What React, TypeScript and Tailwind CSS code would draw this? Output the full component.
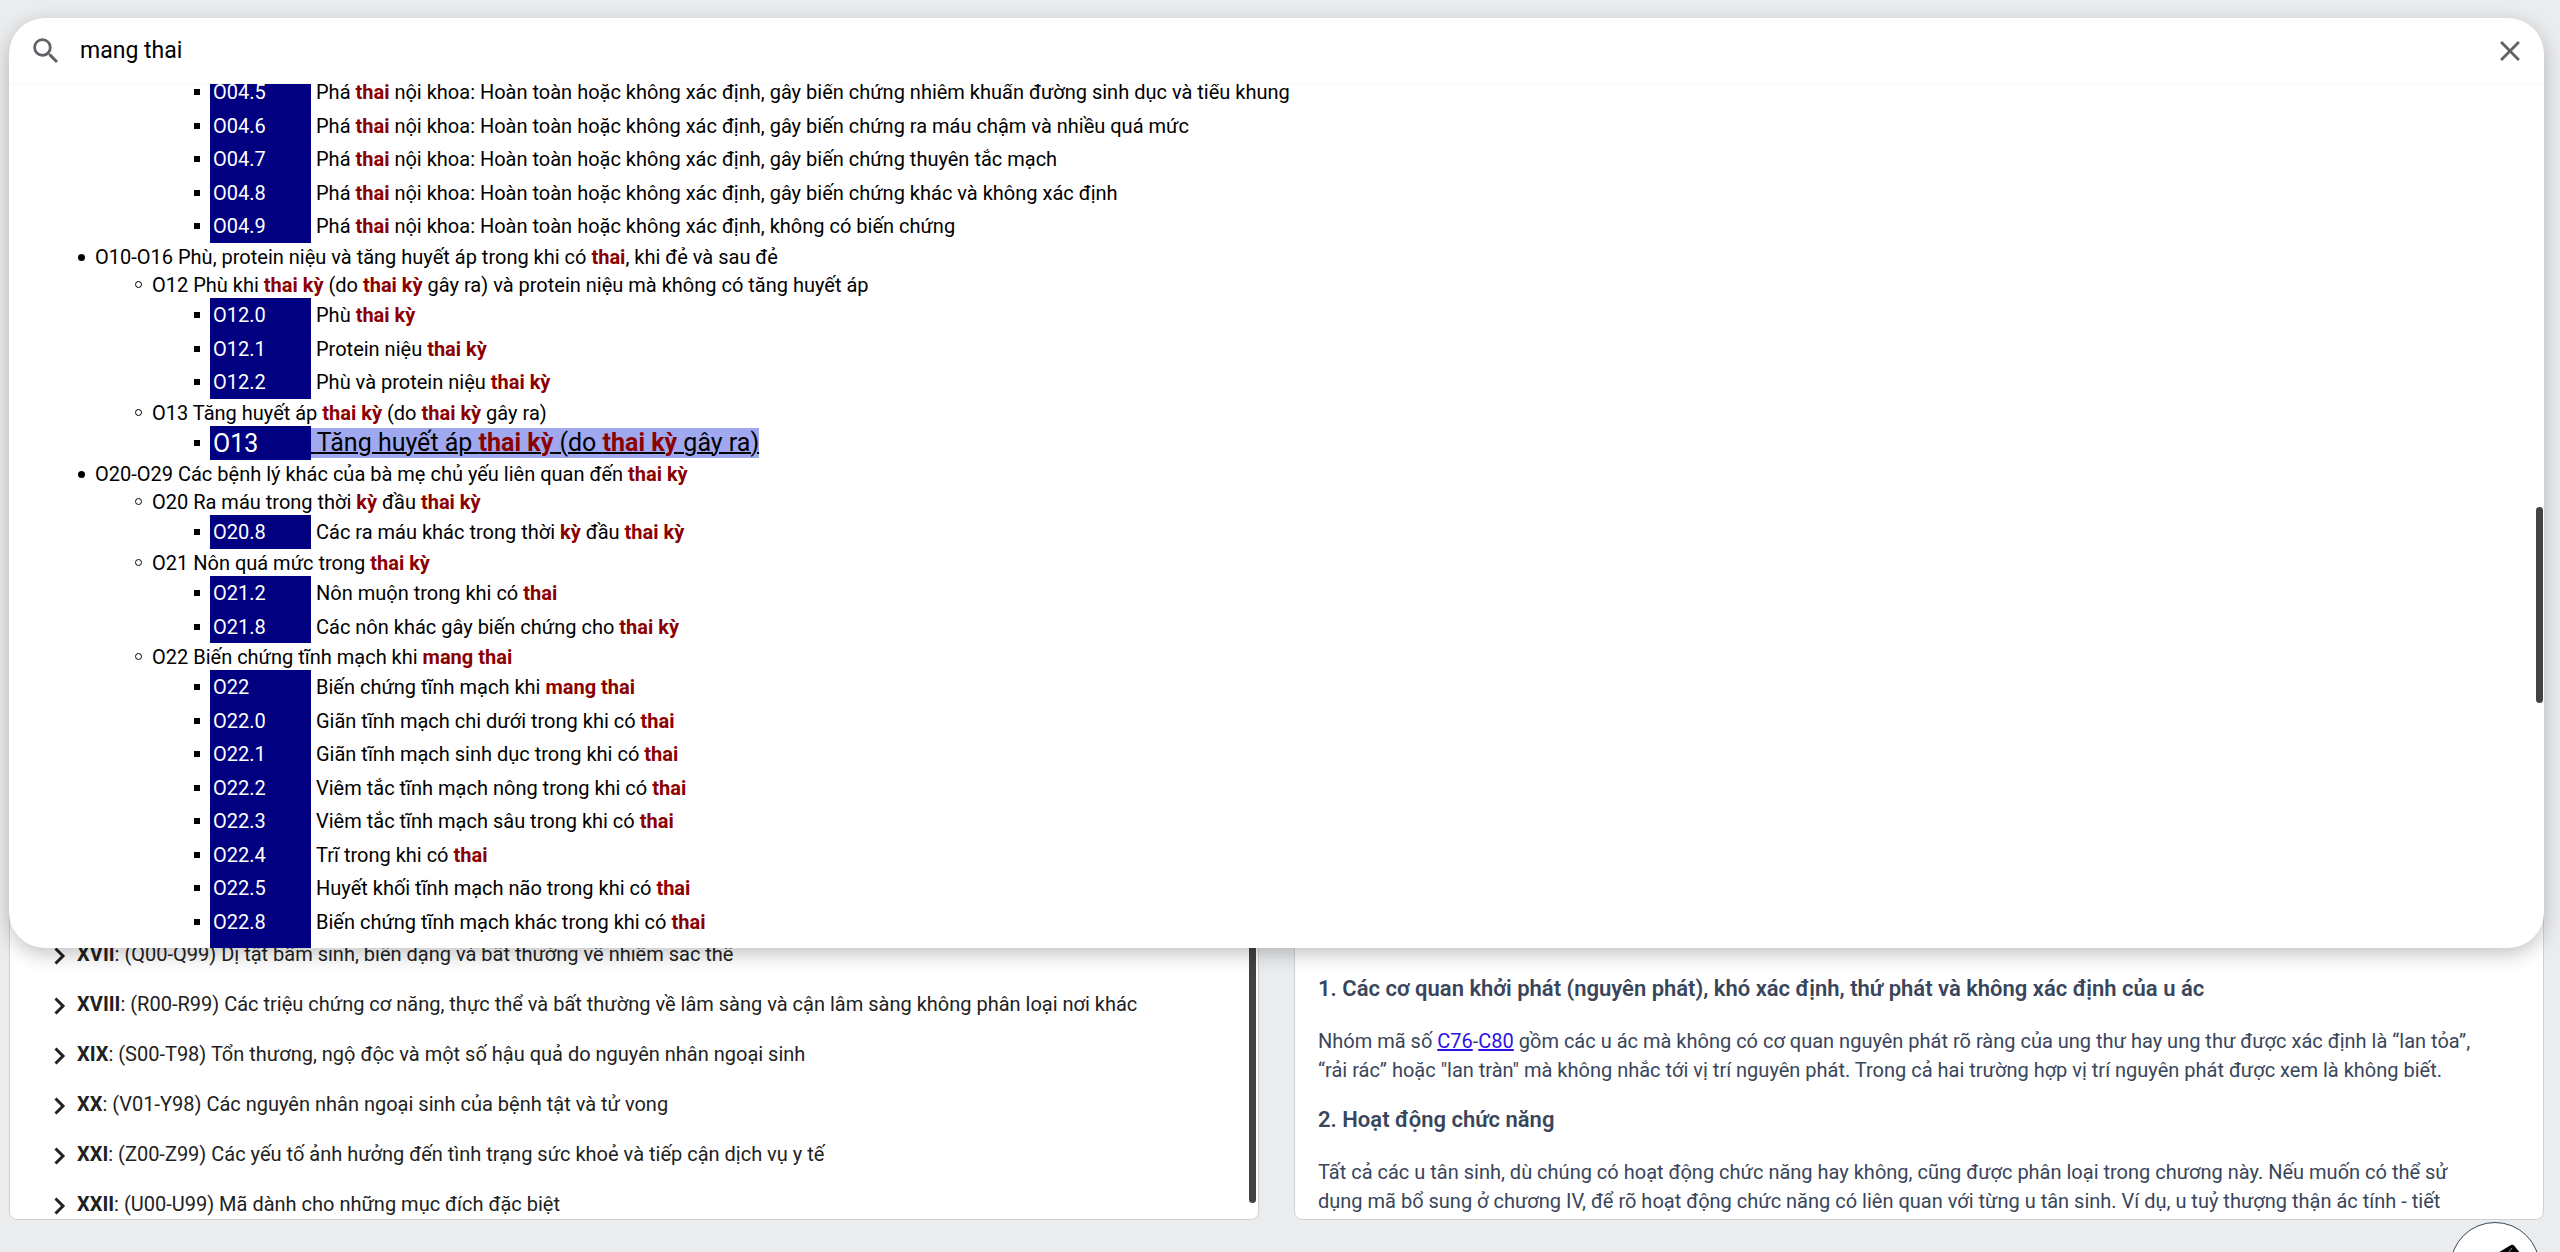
import React, { ReactNode } from "react";

type Item = { code: string; text: string; active?: boolean };
type Block = { title: string; items: Item[] };
type Chapter = { title: string; blocks: Block[] };

const loose: Item[] = [
  { code: "O04.5", text: "Phá *thai* nội khoa: Hoàn toàn hoặc không xác định, gây biến chứng nhiêm khuẩn đường sinh dục và tiểu khung" },
  { code: "O04.6", text: "Phá *thai* nội khoa: Hoàn toàn hoặc không xác định, gây biến chứng ra máu chậm và nhiều quá mức" },
  { code: "O04.7", text: "Phá *thai* nội khoa: Hoàn toàn hoặc không xác định, gây biến chứng thuyên tắc mạch" },
  { code: "O04.8", text: "Phá *thai* nội khoa: Hoàn toàn hoặc không xác định, gây biến chứng khác và không xác định" },
  { code: "O04.9", text: "Phá *thai* nội khoa: Hoàn toàn hoặc không xác định, không có biến chứng" },
];

const chapters: Chapter[] = [
  {
    title: "O10-O16 Phù, protein niệu và tăng huyết áp trong khi có *thai*, khi đẻ và sau đẻ",
    blocks: [
      {
        title: "O12 Phù khi *thai kỳ* (do *thai kỳ* gây ra) và protein niệu mà không có tăng huyết áp",
        items: [
          { code: "O12.0", text: "Phù *thai kỳ*" },
          { code: "O12.1", text: "Protein niệu *thai kỳ*" },
          { code: "O12.2", text: "Phù và protein niệu *thai kỳ*" },
        ],
      },
      {
        title: "O13 Tăng huyết áp *thai kỳ* (do *thai kỳ* gây ra)",
        items: [{ code: "O13", text: "Tăng huyết áp *thai kỳ* (do *thai kỳ* gây ra)", active: true }],
      },
    ],
  },
  {
    title: "O20-O29 Các bệnh lý khác của bà mẹ chủ yếu liên quan đến *thai kỳ*",
    blocks: [
      {
        title: "O20 Ra máu trong thời *kỳ* đầu *thai kỳ*",
        items: [{ code: "O20.8", text: "Các ra máu khác trong thời *kỳ* đầu *thai kỳ*" }],
      },
      {
        title: "O21 Nôn quá mức trong *thai kỳ*",
        items: [
          { code: "O21.2", text: "Nôn muộn trong khi có *thai*" },
          { code: "O21.8", text: "Các nôn khác gây biến chứng cho *thai kỳ*" },
        ],
      },
      {
        title: "O22 Biến chứng tĩnh mạch khi *mang thai*",
        items: [
          { code: "O22", text: "Biến chứng tĩnh mạch khi *mang thai*" },
          { code: "O22.0", text: "Giãn tĩnh mạch chi dưới trong khi có *thai*" },
          { code: "O22.1", text: "Giãn tĩnh mạch sinh dục trong khi có *thai*" },
          { code: "O22.2", text: "Viêm tắc tĩnh mạch nông trong khi có *thai*" },
          { code: "O22.3", text: "Viêm tắc tĩnh mạch sâu trong khi có *thai*" },
          { code: "O22.4", text: "Trĩ trong khi có *thai*" },
          { code: "O22.5", text: "Huyết khối tĩnh mạch não trong khi có *thai*" },
          { code: "O22.8", text: "Biến chứng tĩnh mạch khác trong khi có *thai*" },
        ],
      },
    ],
  },
];

const tree = [
  ["XVII", "(Q00-Q99) Dị tật bẩm sinh, biến dạng và bất thường về nhiễm sắc thể"],
  ["XVIII", "(R00-R99) Các triệu chứng cơ năng, thực thể và bất thường về lâm sàng và cận lâm sàng không phân loại nơi khác"],
  ["XIX", "(S00-T98) Tổn thương, ngộ độc và một số hậu quả do nguyên nhân ngoại sinh"],
  ["XX", "(V01-Y98) Các nguyên nhân ngoại sinh của bệnh tật và tử vong"],
  ["XXI", "(Z00-Z99) Các yếu tố ảnh hưởng đến tình trạng sức khoẻ và tiếp cận dịch vụ y tế"],
  ["XXII", "(U00-U99) Mã dành cho những mục đích đặc biệt"],
];

/** Renders text in which the parts between asterisks are search matches. */
function Marked({ text }: { text: string }): ReactNode {
  return text.split("*").map((part, i) =>
    i % 2 ? (
      <b key={i} className="font-bold text-[#8b0000]">{part}</b>
    ) : (
      <span key={i}>{part}</span>
    ),
  );
}

function Items({ items }: { items: Item[] }) {
  return (
    <ul>
      {items.map((it) => (
        <li key={it.code} className="flex items-center pl-[58px] odd:h-[34px] even:h-[33px]">
          <span className="-ml-4 mr-[10px] size-[6px] shrink-0 bg-black" />
          <span
            className={
              it.active
                ? "flex h-full w-[101px] shrink-0 items-center bg-[#000080] pl-[3px] text-[25px] text-white"
                : "flex h-full w-[101px] shrink-0 items-center bg-[#000080] pl-[3px] text-white"
            }
          >
            {it.code}
          </span>
          {it.active ? (
            <span className="whitespace-pre bg-[#a0a8f0] text-[25px] leading-[30px] underline decoration-2">
              {" "}
              <Marked text={it.text} />
            </span>
          ) : (
            <span className="whitespace-nowrap pl-[5px]"><Marked text={it.text} /></span>
          )}
        </li>
      ))}
    </ul>
  );
}

export default function App() {
  return (
    <div className="relative h-screen overflow-hidden bg-[#ebecee] font-[Roboto,sans-serif] text-xl text-black">
      <div className="grid h-full grid-cols-2 gap-[35px] pb-8 pl-[9px] pr-4 pt-24">
        <section className="relative flex min-w-0 flex-col justify-end overflow-hidden rounded-lg border border-[#d0d1d4] bg-white text-[#212121]">
          <ul className="-mb-[10px]">
            {tree.map(([num, label]) => (
              <li key={num} className="flex h-[50px] items-center">
                <button type="button" className="flex items-center whitespace-nowrap pl-11 text-left">
                  <svg viewBox="0 0 12 18" className="mr-[11px] mt-1 h-[18px] w-3" fill="none" stroke="#212121" strokeWidth="3">
                    <path d="M1.5 1.5L9 9l-7.500 7.500" />
                  </svg>
                  <span><b className="font-bold">{num}</b>: {label}</span>
                </button>
              </li>
            ))}
          </ul>
          <div className="absolute bottom-4 right-[2px] h-3/4 w-[7px] rounded-full bg-[#424242]" />
        </section>
        <section className="flex min-w-0 flex-col justify-end overflow-hidden rounded-lg border border-[#d0d1d4] bg-white pl-[23px] pr-12 leading-[29px] text-[#39455a]">
          <h3 className="text-[22px] font-semibold leading-[29px]">1. Các cơ quan khởi phát (nguyên phát), khó xác định, thứ phát và không xác định của u ác</h3>
          <p className="mt-6">
            Nhóm mã số <a href="#c76" className="text-[#2a12e8] underline">C76</a>-<a href="#c80" className="text-[#2a12e8] underline">C80</a> gồm các u ác mà không có cơ quan nguyên phát rõ ràng của ung thư hay ung thư được xác định là “lan tỏa”, “rải rác” hoặc "lan tràn" mà không nhắc tới vị trí nguyên phát. Trong cả hai trường hợp vị trí nguyên phát được xem là không biết.
          </p>
          <h3 className="mt-5 text-[22px] font-semibold leading-[29px]">2. Hoạt động chức năng</h3>
          <p className="mb-[3px] mt-6">
            Tất cả các u tân sinh, dù chúng có hoạt động chức năng hay không, cũng được phân loại trong chương này. Nếu muốn có thể sử dụng mã bổ sung ở chương IV, để rõ hoạt động chức năng có liên quan với từng u tân sinh. Ví dụ, u tuỷ thượng thận ác tính - tiết
          </p>
        </section>
      </div>

      <div className="absolute inset-x-0 top-[18px] ml-[9px] mr-4 overflow-hidden rounded-[36px] bg-white shadow-[0_6px_20px_rgba(0,0,0,0.24)]">
        <div className="flex h-[66px] items-center border-b border-[#f8f8f8] pl-5 pr-[17px]">
          <svg viewBox="0 0 24 24" className="size-[34px] shrink-0" fill="#5f6368">
            <path d="M15.500 14h-.79l-.28-.27A6.471 6.471 0 0 0 16 9.500 6.500 6.500 0 1 0 9.500 16c1.610 0 3.090-.59 4.230-1.570l.27.28v.79l5 4.990L20.490 19l-4.990-5zm-6 0C7.010 14 5 11.990 5 9.500S7.010 5 9.500 5 14 7.010 14 9.500 11.990 14 9.500 14z" />
          </svg>
          <input aria-label="Tìm kiếm" defaultValue="mang thai" className="ml-[17px] min-w-0 flex-1 bg-transparent pt-[2px] text-[23px] outline-none" />
          <button type="button" aria-label="Xóa">
            <svg viewBox="0 0 24 24" className="size-[34px]" fill="#5f6368">
              <path d="M19 6.410L17.590 5 12 10.590 6.410 5 5 6.410 10.590 12 5 17.590 6.410 19 12 13.410 17.590 19 19 17.590 13.410 12z" />
            </svg>
          </button>
        </div>
        <div className="h-[864px] overflow-hidden">
          <div className="-mt-[9px] pl-[29px]">
            <div className="pl-[114px]"><Items items={loose} /></div>
            {chapters.map((c) => (
              <div key={c.title} className="pl-[57px]">
                <div className="flex h-7 items-center">
                  <span className="-ml-[17px] mr-[10px] size-[7px] shrink-0 rounded-full bg-black" />
                  <span className="whitespace-nowrap"><Marked text={c.title} /></span>
                </div>
                {c.blocks.map((b) => (
                  <div key={b.title} className="pl-[57px]">
                    <div className="flex h-[27px] items-center">
                      <span className="-ml-[17px] mr-[10px] size-[7px] shrink-0 rounded-full border border-black" />
                      <span className="whitespace-nowrap"><Marked text={b.title} /></span>
                    </div>
                    <Items items={b.items} />
                  </div>
                ))}
              </div>
            ))}
            <div className="ml-[172px] h-[34px] w-[101px] bg-[#000080]" />
          </div>
        </div>
        <div className="absolute right-px top-[489px] h-[196px] w-[7px] rounded-full bg-[#424242]" />
      </div>

      <button
        type="button"
        aria-label="Góp ý"
        className="absolute -bottom-[60px] right-5 size-[90px] rounded-full border border-[#39455a] bg-white"
      >
        <svg viewBox="0 0 88 88" className="size-full" fill="#000">
          <path d="M45 31L60 22q2-1 3.500 1L70 31l4 7L34 72l-12 4 3-13z" />
          <path d="M57 30l4-5" stroke="#fff" strokeWidth="0.600" />
        </svg>
      </button>
    </div>
  );
}
